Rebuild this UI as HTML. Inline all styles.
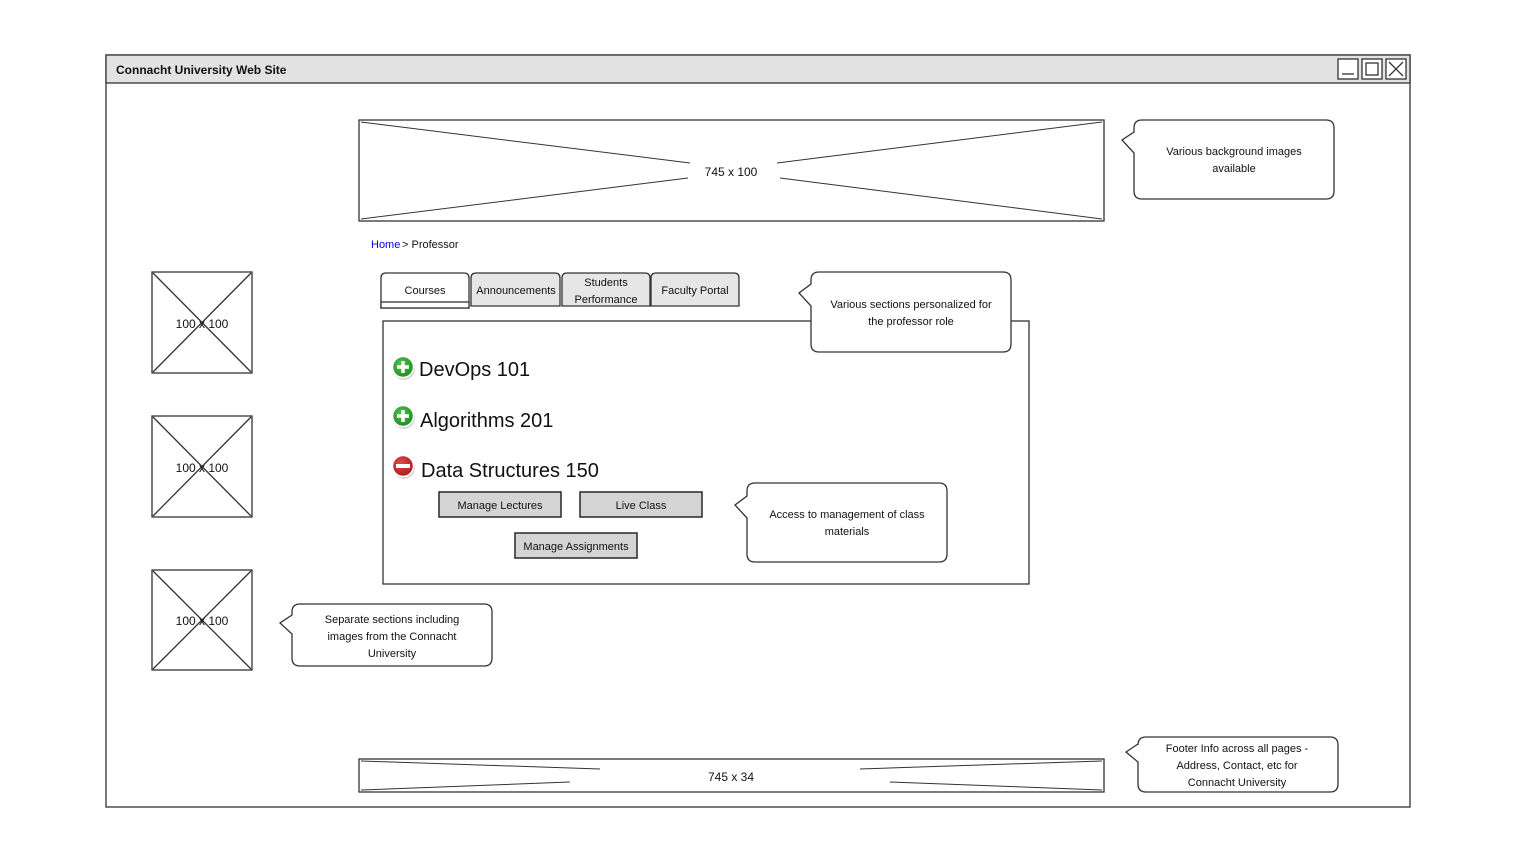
<!DOCTYPE html>
<html><head><meta charset="utf-8"><style>
html,body{margin:0;padding:0;background:#fff;}
body{width:1531px;height:853px;position:relative;overflow:hidden;font-family:"Comic Sans MS","Liberation Sans",sans-serif;}
svg{position:absolute;left:0;top:0;}
text{font-family:"Liberation Sans",sans-serif;fill:#111;}
</style></head><body>
<svg width="1531" height="853" viewBox="0 0 1531 853">
<defs>
<radialGradient id="g" cx="0.4" cy="0.35" r="0.7"><stop offset="0" stop-color="#4cc04c"/><stop offset="1" stop-color="#1f8a1f"/></radialGradient>
<radialGradient id="r" cx="0.4" cy="0.35" r="0.7"><stop offset="0" stop-color="#e04848"/><stop offset="1" stop-color="#a81c1c"/></radialGradient>
</defs>
<g fill="none" stroke="#333" stroke-width="1.3">
<!-- window -->
<rect x="106" y="55" width="1304" height="752" fill="#fff"/>
<rect x="106" y="55" width="1304" height="28" fill="#e2e2e2"/>
<rect x="1338" y="59" width="20" height="20" fill="#fff"/>
<rect x="1362" y="59" width="20" height="20" fill="#fff"/>
<rect x="1386" y="59" width="20" height="20" fill="#fff"/>
<line x1="1342" y1="74" x2="1354" y2="74"/>
<rect x="1366" y="63" width="12" height="12"/>
<path d="M1389 62 L1403 76 M1403 62 L1389 76"/>
<!-- banner -->
<rect x="359" y="120" width="745" height="101"/>
<path d="M361 122 L690 163 M777 163 L1102 122 M361 219 L688 178 M780 178 L1102 219" stroke-width="1"/>
<!-- images -->
<rect x="152" y="272" width="100" height="101"/>
<path d="M153 273 L251 372 M251 273 L153 372"/>
<rect x="152" y="416" width="100" height="101"/>
<path d="M153 417 L251 516 M251 417 L153 516"/>
<rect x="152" y="570" width="100" height="100"/>
<path d="M153 571 L251 669 M251 571 L153 669"/>
<!-- tabs -->
<path d="M381 308 L381 278 Q381 273 386 273 L464 273 Q469 273 469 278 L469 308 Z" fill="#fff"/>
<rect x="381" y="302" width="88" height="6" fill="#fff"/>
<path d="M471 306 L471 278 Q471 273 476 273 L555 273 Q560 273 560 278 L560 306 Z" fill="#e6e6e6"/>
<path d="M562 306 L562 278 Q562 273 567 273 L645 273 Q650 273 650 278 L650 306 Z" fill="#e6e6e6"/>
<path d="M651 306 L651 278 Q651 273 656 273 L734 273 Q739 273 739 278 L739 306 Z" fill="#e6e6e6"/>
<!-- content -->
<rect x="383" y="321" width="646" height="263" fill="#fff"/>
<!-- buttons -->
<rect x="439" y="492" width="122" height="25" fill="#d4d4d4" stroke-width="1.6"/>
<rect x="580" y="492" width="122" height="25" fill="#d4d4d4" stroke-width="1.6"/>
<rect x="515" y="533" width="122" height="25" fill="#d4d4d4" stroke-width="1.6"/>
<!-- footer -->
<rect x="359" y="759" width="745" height="33"/>
<path d="M361 761 L600 769 M860 769 L1102 761 M361 790 L570 782 M890 782 L1102 790" stroke-width="1"/>
<!-- callouts -->
<path d="M1134 128 Q1134 120 1142 120 L1326 120 Q1334 120 1334 128 L1334 191 Q1334 199 1326 199 L1142 199 Q1134 199 1134 191 L1134 153 L1122 140 L1134 132 Z" fill="#fff"/>
<path d="M811 280 Q811 272 819 272 L1003 272 Q1011 272 1011 280 L1011 344 Q1011 352 1003 352 L819 352 Q811 352 811 344 L811 306 L799 293 L811 284 Z" fill="#fff"/>
<path d="M747 491 Q747 483 755 483 L939 483 Q947 483 947 491 L947 554 Q947 562 939 562 L755 562 Q747 562 747 554 L747 518 L735 505 L747 496 Z" fill="#fff"/>
<path d="M292 612 Q292 604 300 604 L484 604 Q492 604 492 612 L492 658 Q492 666 484 666 L300 666 Q292 666 292 658 L292 634 L280 623 L292 615 Z" fill="#fff"/>
<path d="M1138 745 Q1138 737 1146 737 L1330 737 Q1338 737 1338 745 L1338 784 Q1338 792 1330 792 L1146 792 Q1138 792 1138 784 L1138 762 L1126 752 L1138 744 Z" fill="#fff"/>
</g>
<!-- icons -->
<circle cx="404" cy="369" r="11" fill="#bbb" opacity=".6"/>
<circle cx="403" cy="367" r="10.5" fill="url(#g)" stroke="#fff" stroke-width="1.5"/>
<path d="M397 367 H409 M403 361 V373" stroke="#fff" stroke-width="3.5"/>
<circle cx="404" cy="418" r="11" fill="#bbb" opacity=".6"/>
<circle cx="403" cy="416" r="10.5" fill="url(#g)" stroke="#fff" stroke-width="1.5"/>
<path d="M397 416 H409 M403 410 V422" stroke="#fff" stroke-width="3.5"/>
<circle cx="404" cy="468" r="11" fill="#bbb" opacity=".6"/>
<circle cx="403" cy="466" r="10.5" fill="url(#r)" stroke="#fff" stroke-width="1.5"/>
<path d="M396 466 H410" stroke="#fff" stroke-width="4"/>
<!-- text -->
<text x="116" y="74" font-size="12" font-weight="bold">Connacht University Web Site</text>
<text x="731" y="176" font-size="12" text-anchor="middle">745 x 100</text>
<text x="371" y="248" font-size="11" style="fill:#0000ee">Home</text>
<text x="402" y="248" font-size="11">&gt; Professor</text>
<text x="202" y="328" font-size="12" text-anchor="middle">100 x 100</text>
<text x="202" y="472" font-size="12" text-anchor="middle">100 x 100</text>
<text x="202" y="625" font-size="12" text-anchor="middle">100 x 100</text>
<text x="425" y="294" font-size="11" text-anchor="middle">Courses</text>
<text x="516" y="294" font-size="11" text-anchor="middle">Announcements</text>
<text x="606" y="286" font-size="11" text-anchor="middle">Students</text>
<text x="606" y="303" font-size="11" text-anchor="middle">Performance</text>
<text x="695" y="294" font-size="11" text-anchor="middle">Faculty Portal</text>
<text x="419" y="376" font-size="20">DevOps 101</text>
<text x="420" y="427" font-size="20">Algorithms 201</text>
<text x="421" y="477" font-size="20">Data Structures 150</text>
<text x="500" y="509" font-size="11" text-anchor="middle">Manage Lectures</text>
<text x="641" y="509" font-size="11" text-anchor="middle">Live Class</text>
<text x="576" y="550" font-size="11" text-anchor="middle">Manage Assignments</text>
<text x="731" y="781" font-size="12" text-anchor="middle">745 x 34</text>
<text x="1234" y="155" font-size="11" text-anchor="middle">Various background images</text>
<text x="1234" y="172" font-size="11" text-anchor="middle">available</text>
<text x="911" y="308" font-size="11" text-anchor="middle">Various sections personalized for</text>
<text x="911" y="325" font-size="11" text-anchor="middle">the professor role</text>
<text x="847" y="518" font-size="11" text-anchor="middle">Access to management of class</text>
<text x="847" y="535" font-size="11" text-anchor="middle">materials</text>
<text x="392" y="623" font-size="11" text-anchor="middle">Separate sections including</text>
<text x="392" y="640" font-size="11" text-anchor="middle">images from the Connacht</text>
<text x="392" y="657" font-size="11" text-anchor="middle">University</text>
<text x="1237" y="752" font-size="11" text-anchor="middle">Footer Info across all pages -</text>
<text x="1237" y="769" font-size="11" text-anchor="middle">Address, Contact, etc for</text>
<text x="1237" y="786" font-size="11" text-anchor="middle">Connacht University</text>
</svg>
</body></html>
